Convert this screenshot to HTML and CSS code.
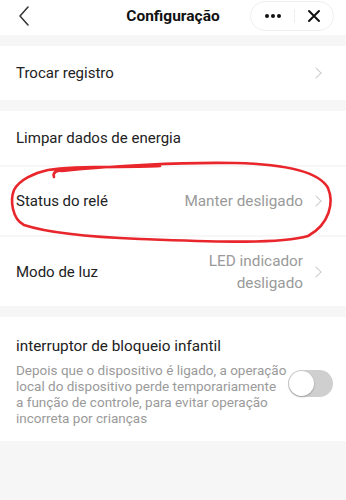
FILE: index.html
```html
<!DOCTYPE html>
<html lang="pt">
<head>
    <meta charset="UTF-8">
    <meta name="viewport" content="width=device-width, initial-scale=1.0">
    <title>Configuração</title>
    <link rel="stylesheet" href="styles.css">
</head>
<body>
    <div class="page">
        <header class="top-bar">
            <svg class="back-icon" width="12" height="20" viewBox="0 0 12 20">
                <path d="M10 1 L2 10 L10 19" fill="none" stroke="#333" stroke-width="1.5" stroke-linecap="round" stroke-linejoin="round"/>
            </svg>
            <h1 class="top-title">Configuração</h1>
            <div class="capsule">
                <span class="capsule-dots">
                    <i></i><i></i><i></i>
                </span>
                <span class="capsule-sep"></span>
                <svg class="capsule-close" width="14" height="14" viewBox="0 0 14 14">
                    <path d="M2 2 L12 12 M12 2 L2 12" stroke="#111" stroke-width="2" stroke-linecap="round"/>
                </svg>
            </div>
        </header>

        <section class="group">
            <div class="row row-single">
                <span class="row-label">Trocar registro</span>
                <span class="chevron"></span>
            </div>
        </section>

        <section class="group">
            <div class="row row-plain">
                <span class="row-label">Limpar dados de energia</span>
            </div>
            <div class="row row-status">
                <span class="row-label">Status do relé</span>
                <span class="row-value">Manter desligado</span>
                <span class="chevron"></span>
            </div>
            <div class="row row-light">
                <span class="row-label">Modo de luz</span>
                <span class="row-value">LED indicador<br>desligado</span>
                <span class="chevron"></span>
            </div>
        </section>

        <section class="group">
            <div class="lock-row">
                <div class="lock-text">
                    <div class="lock-title">interruptor de bloqueio infantil</div>
                    <div class="lock-desc">Depois que o dispositivo é ligado, a operação<br>local do dispositivo perde temporariamente<br>a função de controle, para evitar operação<br>incorreta por crianças</div>
                </div>
                <div class="toggle"><span class="toggle-knob"></span></div>
            </div>
        </section>

        <svg class="scribble" width="346" height="500" viewBox="0 0 346 500">
            <path d="M54 177 C52 172 58 170 62 171 C110 166 180 162 235 163 C280 164 318 170 328 188 C334 202 330 224 308 236 C278 245 200 241 140 239 C90 237 48 233 24 225 C12 219 10 200 14 190 C19 180 34 173 48 170 C80 165 130 168 160 166"
                  fill="none" stroke="#e8262c" stroke-width="2.6" stroke-linecap="round" stroke-linejoin="round"/>
        </svg>
    </div>
</body>
</html>
```

FILE: styles.css
```css
/* Global Styles */
body {
    margin: 0;
    padding: 0;
    background: #f6f6f6;
    font-family: Roboto, 'Noto Sans', sans-serif;
    color: #222;
}

.page {
    position: relative;
    width: 346px;
    min-height: 500px;
}

/* Top bar */
.top-bar {
    height: 35px;
    background: #fff;
    display: flex;
    align-items: center;
    position: relative;
    margin-bottom: 11px;
}

.back-icon {
    position: absolute;
    left: 18px;
    top: 6px;
}

.top-title {
    margin: 0;
    width: 100%;
    text-align: center;
    font-size: 15.5px;
    font-weight: bold;
    color: #111;
    line-height: 32px;
    align-self: flex-start;
}

.capsule {
    position: absolute;
    right: 12px;
    top: 1px;
    width: 84px;
    height: 30px;
    box-sizing: border-box;
    border: 1px solid #eee;
    border-radius: 16px;
    display: flex;
    align-items: center;
    background: #fff;
}

.capsule-dots {
    width: 43px;
    display: flex;
    justify-content: center;
    gap: 2px;
}

.capsule-dots i {
    width: 4px;
    height: 4px;
    border-radius: 50%;
    background: #111;
}

.capsule-sep {
    width: 1px;
    height: 14px;
    background: #eee;
}

.capsule-close {
    margin-left: 12px;
}

/* Groups */
.group {
    background: #fff;
    margin-bottom: 11px;
}

.row {
    display: flex;
    align-items: center;
    padding: 0 16px;
    border-bottom: 2px solid #f7f7f7;
}

.row:last-child {
    border-bottom: none;
}

.row-single {
    height: 54px;
}

.row-plain {
    height: 54px;
}

.row-status {
    height: 68px;
}

.row-light {
    height: 69px;
}

.row-label {
    flex: 1;
    font-size: 15px;
    color: #222;
}

.row-value {
    font-size: 15.3px;
    color: #9a9a9a;
    text-align: right;
    line-height: 22px;
}

.chevron {
    width: 7px;
    height: 7px;
    border-top: 1.5px solid #ccc;
    border-right: 1.5px solid #ccc;
    transform: rotate(45deg);
    margin-left: 9px;
    margin-right: 10px;
}

/* Child lock */
.lock-row {
    display: flex;
    align-items: center;
    padding: 18px 16px 14px;
    height: 92px;
}

.lock-text {
    flex: none;
    width: 272px;
}

.lock-title {
    font-size: 15.3px;
    color: #222;
    margin-bottom: 7px;
}

.lock-desc {
    font-size: 13.5px;
    line-height: 16px;
    color: #9a9a9a;
    white-space: nowrap;
}

.toggle {
    flex: none;
    margin-left: auto;
    width: 45px;
    height: 27px;
    border-radius: 14px;
    background: #cfcfcf;
    position: relative;
    margin-top: 4px;
}

.toggle-knob {
    position: absolute;
    left: 1px;
    top: 1px;
    width: 25px;
    height: 25px;
    border-radius: 50%;
    background: #fff;
    box-shadow: 0 1px 2px rgba(0, 0, 0, 0.25);
}

/* Red marker annotation */
.scribble {
    position: absolute;
    left: 0;
    top: 0;
    pointer-events: none;
}
```
